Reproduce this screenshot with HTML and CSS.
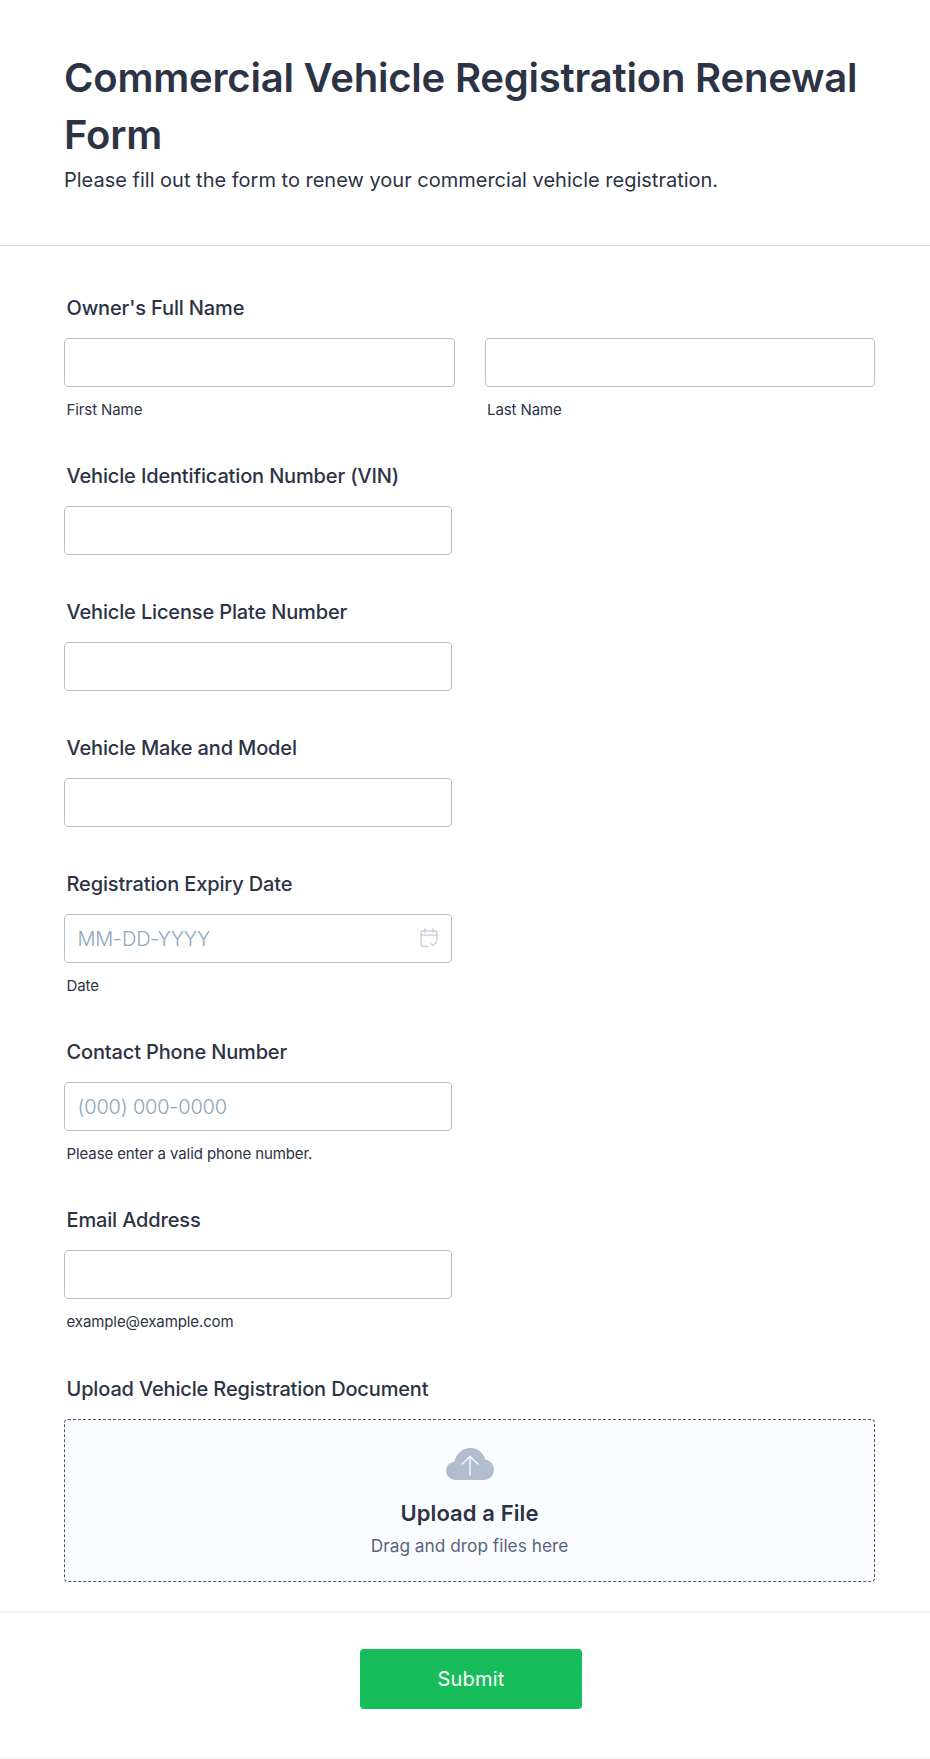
FILE: index.html
```html
<!DOCTYPE html>
<html lang="en">
<head>
    <meta charset="UTF-8" />
    <meta name="viewport" content="width=device-width, initial-scale=1" />
    <title>Commercial Vehicle Registration Renewal Form</title>
    <link rel="stylesheet" href="styles.css">
</head>
<body>
    <header class="form_header">
        <h1>Commercial Vehicle Registration Renewal Form</h1>
        <p>Please fill out the form to renew your commercial vehicle registration.</p>
    </header>

    <form class="form_body" novalidate>
        <div class="field">
            <label class="field_label" for="first_name">Owner's Full Name</label>
            <div class="name_row">
                <div class="name_col">
                    <input type="text" id="first_name" class="text_input" />
                    <div class="sublabel">First Name</div>
                </div>
                <div class="name_col">
                    <input type="text" id="last_name" class="text_input" />
                    <div class="sublabel">Last Name</div>
                </div>
            </div>
        </div>

        <div class="field">
            <label class="field_label" for="vin">Vehicle Identification Number (VIN)</label>
            <input type="text" id="vin" class="text_input short" />
        </div>

        <div class="field">
            <label class="field_label" for="plate">Vehicle License Plate Number</label>
            <input type="text" id="plate" class="text_input short" />
        </div>

        <div class="field">
            <label class="field_label" for="make">Vehicle Make and Model</label>
            <input type="text" id="make" class="text_input short" />
        </div>

        <div class="field">
            <label class="field_label" for="expiry">Registration Expiry Date</label>
            <div class="date_wrap short">
                <input type="text" id="expiry" class="text_input" placeholder="MM-DD-YYYY" />
                <svg class="date_icon" width="18" height="20" viewBox="0 0 18 20" fill="none" stroke="#c5cad6" stroke-width="1.3" stroke-linecap="round" stroke-linejoin="round">
                    <path d="M8 18.4H3.2C2 18.4 1 17.4 1 16.2V5C1 3.8 2 2.8 3.2 2.8H14.8C16 2.8 17 3.8 17 5V12"/>
                    <path d="M1 7.2H17"/>
                    <path d="M5 1V4.4M13 1V4.4"/>
                    <path d="M11 15.6L13 17.6L16.6 14"/>
                </svg>
            </div>
            <div class="sublabel">Date</div>
        </div>

        <div class="field">
            <label class="field_label" for="phone">Contact Phone Number</label>
            <input type="text" id="phone" class="text_input short" placeholder="(000) 000-0000" />
            <div class="sublabel">Please enter a valid phone number.</div>
        </div>

        <div class="field">
            <label class="field_label" for="email">Email Address</label>
            <input type="email" id="email" class="text_input short" />
            <div class="sublabel">example@example.com</div>
        </div>

        <div class="field upload_field">
            <div class="field_label">Upload Vehicle Registration Document</div>
            <div class="upload_box">
                <svg width="48" height="32" viewBox="0 0 48 32">
                    <path fill="#b1bccd" d="M10 32C4.5 32 0 28 0 22.8C0 18 3.6 14.2 8.4 13.7C10 6 16.4 0 24.4 0C31.6 0 37.4 4.8 39.2 11.4C44.2 12.4 48 16.6 48 21.8C48 27.6 43.4 32 37.6 32Z"/>
                    <path fill="none" stroke="#f4f6fa" stroke-width="1.5" d="M24 27.5V8.5M15.5 16.5L24 8.5L32.5 16.5"/>
                </svg>
                <div class="upload_title">Upload a File</div>
                <div class="upload_hint">Drag and drop files here</div>
            </div>
        </div>

        <div class="form_footer">
            <button type="submit" class="submit_btn">Submit</button>
        </div>
    </form>
</body>
</html>
```

FILE: styles.css
```css
body, html {
    margin: 0;
    padding: 0;
    font-family: Inter, "Noto Sans", Arial, sans-serif;
    color: #2c3345;
    background-color: white;
}
.form_header {
    height: 246px;
    box-sizing: border-box;
    padding: 49px 64px 0;
    border-bottom: 1px solid #d8dae9;
}
.form_header h1 {
    margin: 0;
    font-size: 40px;
    line-height: 57px;
    font-weight: 600;
    letter-spacing: -0.2px;
}
.form_header p {
    margin: 3px 0 0;
    font-size: 20px;
    line-height: 28px;
}
.form_body {
    padding-top: 50px;
}
.field {
    padding: 0 55px 45px 64px;
}
.field_label {
    display: block;
    padding-left: 2.5px;
    margin-bottom: 18px;
    font-size: 20px;
    line-height: 24px;
    font-weight: 500;
    letter-spacing: -0.15px;
}
.name_row {
    display: flex;
    gap: 30px;
}
.name_col {
    flex: 1;
}
.text_input {
    display: block;
    width: 100%;
    height: 49px;
    box-sizing: border-box;
    padding: 0 12.5px;
    background: white;
    border: 1px solid #b8bdc9;
    border-radius: 4px;
    font-family: inherit;
    font-size: 20px;
    color: #2c3345;
}
.text_input::placeholder {
    color: #8ea6bd;
    font-weight: 300;
    letter-spacing: -0.2px;
    opacity: 1;
}
.short {
    width: 388px;
}
.date_wrap {
    position: relative;
}
.date_icon {
    position: absolute;
    top: 14px;
    right: 14px;
}
.sublabel {
    margin-top: 14px;
    padding-left: 2.5px;
    font-size: 15px;
    line-height: 18px;
    letter-spacing: -0.1px;
}
.upload_field {
    margin-top: 1px;
    padding-bottom: 0;
}
.upload_box {
    height: 163px;
    box-sizing: border-box;
    padding-top: 28px;
    background-color: #fbfcff;
    border: 1px dashed #4f5666;
    border-radius: 4px;
    text-align: center;
}
.upload_box svg {
    display: block;
    margin: 0 auto;
}
.upload_title {
    margin-top: 18px;
    font-size: 22px;
    line-height: 30px;
    font-weight: 600;
    letter-spacing: 0.1px;
}
.upload_hint {
    margin-top: 6px;
    font-size: 17.3px;
    line-height: 24px;
    color: #57647e;
}
.form_footer {
    display: flex;
    justify-content: center;
    margin-top: 29px;
    padding: 36px 53px 49px 65px;
    border-top: 2px solid #f0f1f4;
    border-bottom: 1px solid #f3f3f6;
}
.submit_btn {
    width: 222px;
    height: 60px;
    background-color: #18bd5b;
    color: white;
    border: none;
    border-radius: 4px;
    font-family: inherit;
    font-size: 20px;
    font-weight: 400;
    letter-spacing: 0.2px;
    cursor: pointer;
}
```
